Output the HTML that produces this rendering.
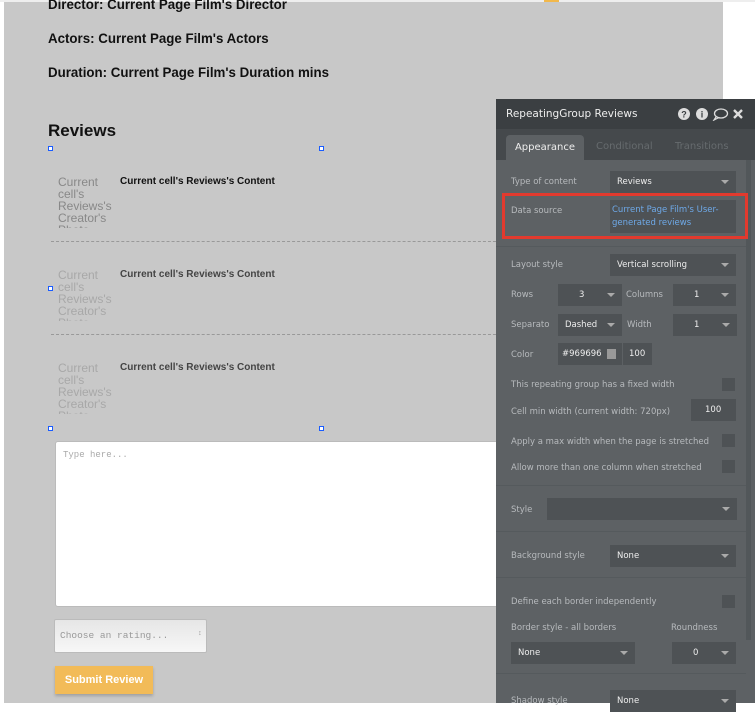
<!DOCTYPE html><html><head><style>
*{box-sizing:border-box;margin:0;padding:0}
body{width:755px;height:703px;background:#fff;position:relative;overflow:hidden;font-family:"Liberation Sans",sans-serif}
.canvas{position:absolute;left:4px;top:2px;width:719px;height:701px;background:#c8c8c8}
.a{position:absolute}
.h{font-weight:bold;font-size:14px;color:#111;transform:scaleX(.95);transform-origin:left}
.hd{width:5px;height:5px;border:1px solid #1a5cff;background:#fff;position:absolute}
.ph{position:absolute;font-size:12px;color:#888;line-height:12px;width:60px;height:52px;overflow:hidden}
.ct{position:absolute;font-size:10px;font-weight:bold;color:#222}
.dash{position:absolute;left:51px;width:450px;border-top:1px dashed #999}
.panel{position:absolute;left:496px;top:99px;width:259px;height:604px;background:#5d6164;color:#c9cbcd;font-size:8.5px;font-family:"DejaVu Sans",sans-serif}
.p{position:absolute}
.lbl{position:absolute;color:#b7babd;font-size:8.5px}
.fld{position:absolute;background:#4e5255;color:#eee;font-size:8.5px;padding-left:7px;line-height:22px;height:22px}
.arr{position:absolute;right:7px;top:9px;border-left:4px solid transparent;border-right:4px solid transparent;border-top:4px solid #aaa}
.cb{position:absolute;left:226px;width:13px;height:13px;background:#4e5255}
.sep{position:absolute;left:0;width:250px;border-top:1px solid #555a5d}
</style></head><body>
<div class="canvas"></div>
<div style="position:absolute;left:0;top:0;width:755px;height:2px;background:#eee"></div>
<div style="position:absolute;left:544px;top:0;width:15px;height:2px;background:#f2b84b"></div>
<div class="a h" style="left:48px;top:-4px">Director: Current Page Film's Director</div>
<div class="a h" style="left:48px;top:30px">Actors: Current Page Film's Actors</div>
<div class="a h" style="left:48px;top:64px">Duration: Current Page Film's Duration mins</div>
<div class="a" style="left:48px;top:121px;font-size:17px;font-weight:bold;color:#111">Reviews</div>
<div class="hd" style="left:48px;top:146px"></div><div class="hd" style="left:319px;top:146px"></div>
<div class="hd" style="left:48px;top:286px"></div>
<div class="hd" style="left:48px;top:426px"></div><div class="hd" style="left:319px;top:426px"></div>
<div class="ph" style="left:58px;top:176px;color:#888">Current cell's Reviews's Creator's Photo</div>
<div class="ct" style="left:120px;top:176px;color:#111">Current cell's Reviews's Content</div>
<div class="dash" style="top:241px"></div>
<div class="ph" style="left:58px;top:269px;color:#a8a8a8">Current cell's Reviews's Creator's Photo</div>
<div class="ct" style="left:120px;top:269px;color:#444">Current cell's Reviews's Content</div>
<div class="dash" style="top:334px"></div>
<div class="ph" style="left:58px;top:362px;color:#a8a8a8">Current cell's Reviews's Creator's Photo</div>
<div class="ct" style="left:120px;top:362px;color:#444">Current cell's Reviews's Content</div>
<div class="a" style="left:55px;top:441px;width:450px;height:166px;background:#fff;border:1px solid #bbb;border-radius:3px;font-family:'Liberation Mono',monospace;font-size:9px;color:#aaa;padding:8px 7px">Type here...</div>
<div class="a" style="left:54px;top:619px;width:153px;height:34px;background:linear-gradient(#e6e6e6,#f7f7f7);border:1px solid #bbb;border-radius:2px;font-family:'Liberation Mono',monospace;font-size:9.5px;color:#999;padding:10px 5px">Choose an rating...<span style="position:absolute;right:4px;top:10px;font-size:7px">&#8597;</span></div>
<div class="a" style="left:55px;top:666px;width:98px;height:28px;background:#f2bb58;color:#fff;font-weight:bold;font-size:11px;text-align:center;line-height:28px;box-shadow:0 2px 3px rgba(0,0,0,.2)">Submit Review</div>

<div class="panel">
<div class="p" style="left:0;top:0;width:259px;height:30px;background:#3b3f42"></div>
<div class="p" style="left:10px;top:9px;font-size:10.5px;color:#eee">RepeatingGroup Reviews</div>
<svg class="p" style="left:182px;top:8px" width="72" height="14" viewBox="0 0 72 14">
<circle cx="6" cy="7" r="6" fill="#ddd"/><text x="6" y="10.5" font-size="9" font-weight="bold" text-anchor="middle" fill="#3b3f42" font-family="Liberation Sans">?</text>
<circle cx="24" cy="7" r="6" fill="#ddd"/><text x="24" y="10.5" font-size="9" font-weight="bold" text-anchor="middle" fill="#3b3f42" font-family="Liberation Sans">i</text>
<ellipse cx="43" cy="6.5" rx="6.5" ry="4.5" fill="none" stroke="#ddd" stroke-width="1.3"/><path d="M38 10 L36 13 L41 10.5" fill="none" stroke="#ddd" stroke-width="1.2"/>
<path d="M56 3 L64 11 M64 3 L56 11" stroke="#ddd" stroke-width="2.4"/>
</svg>
<div class="p" style="left:0;top:30px;width:259px;height:31px;background:#45494c"></div>
<div class="p" style="left:10px;top:36px;width:78px;height:25px;background:#5d6164;border-radius:4px 4px 0 0;color:#eee;font-size:10px;text-align:center;line-height:25px">Appearance</div>
<div class="p" style="left:100px;top:42px;font-size:10px;color:#666b6e">Conditional</div>
<div class="p" style="left:179px;top:42px;font-size:10px;color:#666b6e">Transitions</div>
<div class="p" style="left:250px;top:61px;width:5px;height:480px;background:#52575a"></div>
<div class="lbl" style="left:15px;top:78px">Type of content</div>
<div class="fld" style="left:114px;top:72px;width:126px">Reviews<i class="arr"></i></div>
<div class="p" style="left:6px;top:94px;width:246px;height:46px;border:3px solid #e23a2e"></div>
<div class="lbl" style="left:15px;top:107px">Data source</div>
<div class="p" style="left:114px;top:101px;width:126px;height:33px;background:#4e5255;color:#6ea9e8;font-size:8.5px;padding:4px 2px;line-height:13px">Current Page Film's User-generated reviews</div>
<div class="sep" style="top:147px"></div>
<div class="lbl" style="left:15px;top:161px">Layout style</div>
<div class="fld" style="left:114px;top:155px;width:126px">Vertical scrolling<i class="arr"></i></div>
<div class="lbl" style="left:15px;top:191px">Rows</div>
<div class="fld" style="left:62px;top:185px;width:64px;padding-left:21px">3<i class="arr"></i></div>
<div class="lbl" style="left:130px;top:191px">Columns</div>
<div class="fld" style="left:177px;top:185px;width:63px;padding-left:21px">1<i class="arr"></i></div>
<div class="lbl" style="left:15px;top:221px">Separato</div>
<div class="fld" style="left:62px;top:215px;width:64px">Dashed<i class="arr"></i></div>
<div class="lbl" style="left:131px;top:221px">Width</div>
<div class="fld" style="left:177px;top:215px;width:64px;padding-left:21px">1<i class="arr"></i></div>
<div class="lbl" style="left:15px;top:251px">Color</div>
<div class="fld" style="left:62px;top:244px;width:64px;padding-left:4px">#969696<span style="position:absolute;left:49px;top:6px;width:9px;height:10px;background:#999"></span></div>
<div class="fld" style="left:127px;top:244px;width:29px;padding-left:6px">100</div>
<div class="lbl" style="left:15px;top:281px">This repeating group has a fixed width</div>
<div class="cb" style="top:279px"></div>
<div class="lbl" style="left:15px;top:308px">Cell min width (current width: 720px)</div>
<div class="fld" style="left:195px;top:300px;width:45px;padding-left:14px">100</div>
<div class="lbl" style="left:15px;top:338px">Apply a max width when the page is stretched</div>
<div class="cb" style="top:335px"></div>
<div class="lbl" style="left:15px;top:364px">Allow more than one column when stretched</div>
<div class="cb" style="top:361px"></div>
<div class="sep" style="top:386px"></div>
<div class="lbl" style="left:15px;top:406px">Style</div>
<div class="fld" style="left:51px;top:399px;width:190px"><i class="arr"></i></div>
<div class="sep" style="top:432px"></div>
<div class="lbl" style="left:15px;top:452px">Background style</div>
<div class="fld" style="left:114px;top:446px;width:126px">None<i class="arr"></i></div>
<div class="sep" style="top:478px"></div>
<div class="lbl" style="left:15px;top:498px">Define each border independently</div>
<div class="cb" style="top:496px"></div>
<div class="lbl" style="left:15px;top:524px">Border style - all borders</div>
<div class="lbl" style="left:175px;top:524px">Roundness</div>
<div class="fld" style="left:15px;top:543px;width:124px">None<i class="arr"></i></div>
<div class="fld" style="left:176px;top:543px;width:64px;padding-left:21px">0<i class="arr"></i></div>
<div class="sep" style="top:574px"></div>
<div class="lbl" style="left:15px;top:597px">Shadow style</div>
<div class="fld" style="left:114px;top:591px;width:126px">None<i class="arr"></i></div>
</div>
</body></html>
